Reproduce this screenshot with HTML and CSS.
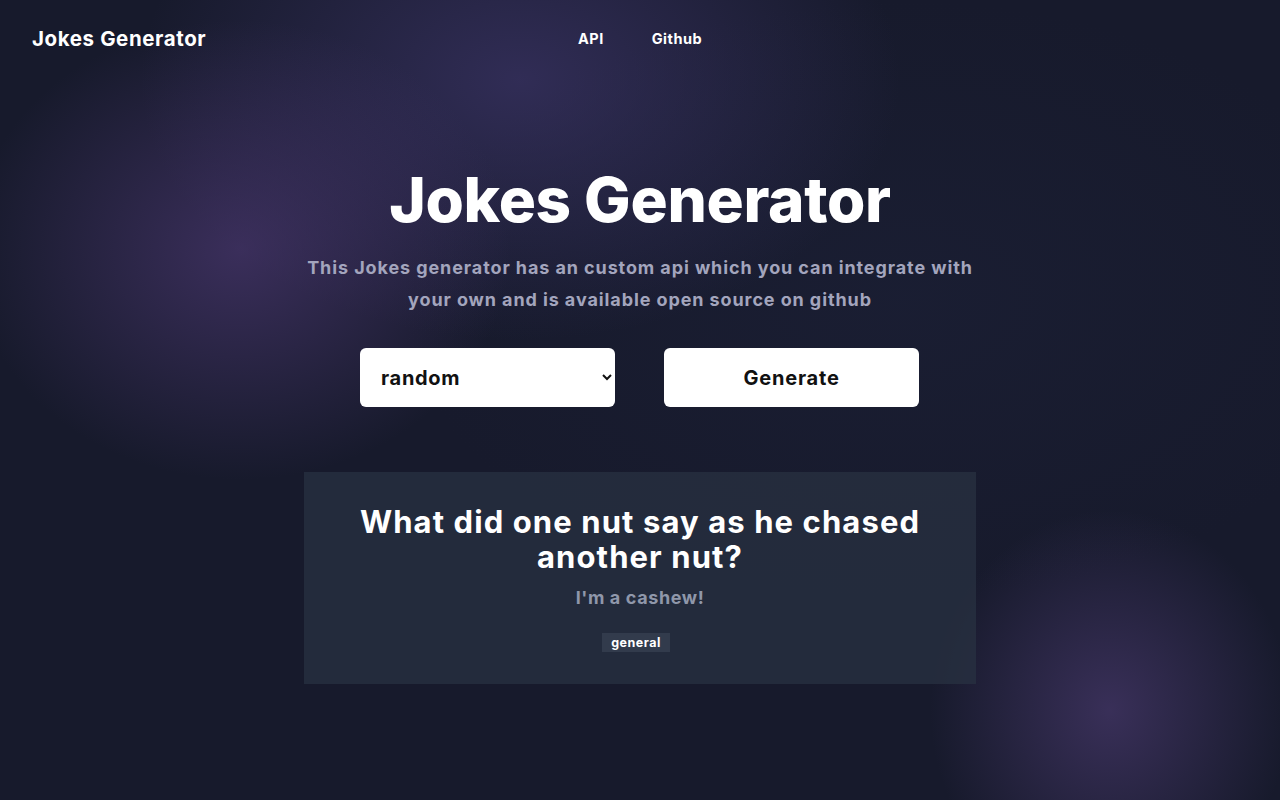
FILE: index.html
```html
<!DOCTYPE html>
<html lang="en">
<head>
<meta charset="utf-8">
<title>Jokes Generator</title>
<link rel="stylesheet" href="styles.css">
</head>
<body>
<div class="page">
  <header class="nav">
    <a class="brand" href="#">Jokes Generator</a>
    <nav class="links">
      <a href="#">API</a>
      <a href="#">Github</a>
    </nav>
    <div></div>
  </header>
  <main class="main">
    <h1 class="title">Jokes Generator</h1>
    <p class="lead">This Jokes generator has an custom api which you can integrate with your own and is available open source on github</p>
    <div class="controls">
      <div class="select-wrap">
        <select class="select">
          <option>random</option>
          <option>general</option>
          <option>programming</option>
        </select>
      </div>
      <button class="btn">Generate</button>
    </div>
    <section class="card">
      <h2 class="question">What did one nut say as he chased another nut?</h2>
      <p class="answer">I'm a cashew!</p>
      <span class="tag">general</span>
    </section>
  </main>
</div>
</body>
</html>
```

FILE: styles.css
```css
* { box-sizing: border-box; }
html, body { margin: 0; height: 100%; }
body {
  font-family: Inter, "Noto Sans", sans-serif;
  color: #fff;
  background-color: #171a2c;
  background-image:
    radial-gradient(ellipse 270px 230px at 240px 250px, rgba(82,60,122,0.6), rgba(82,60,122,0) 100%),
    radial-gradient(ellipse 380px 260px at 520px 80px, rgba(70,60,120,0.55), rgba(70,60,120,0) 100%),
    radial-gradient(ellipse 180px 200px at 1110px 710px, rgba(85,65,125,0.55), rgba(85,65,125,0) 100%),
    radial-gradient(ellipse 500px 300px at 900px 300px, rgba(30,35,60,0.4), rgba(30,35,60,0) 100%);
  overflow: hidden;
}
.page { min-height: 100vh; }
.nav {
  display: grid;
  grid-template-columns: 1fr auto 1fr;
  align-items: center;
  padding: 0 32px;
  height: 76px;
}
.nav a { color: #fff; text-decoration: none; }
.brand { font-size: 20.5px; font-weight: 700; justify-self: start; letter-spacing: 0.6px; }
.links { display: flex; gap: 48px; font-size: 14.5px; font-weight: 700; letter-spacing: 0.5px; }
.main {
  display: flex;
  flex-direction: column;
  align-items: center;
  padding-top: 86px;
}
.title {
  margin: 0;
  font-size: 62px;
  font-weight: 800;
  line-height: 76px;
  letter-spacing: -0.3px;
}
.lead {
  margin: 14px 0 0;
  width: 690px;
  text-align: center;
  font-size: 18px;
  font-weight: 700;
  line-height: 32px;
  letter-spacing: 0.9px;
  color: #a3a5bd;
}
.controls {
  display: flex;
  gap: 49px;
  margin-top: 32px;
  padding-right: 1px;
}
.select-wrap, .btn {
  width: 255px;
  height: 59px;
}
.select {
  width: 100%;
  height: 100%;
  border: 0;
  border-radius: 6px;
  background: #fff;
  color: #111;
  font: 700 20px Inter, sans-serif;
  letter-spacing: 0.7px;
  padding: 0 8px 0 17px;
}
.btn {
  border: 0;
  border-radius: 6px;
  background: #fff;
  color: #111;
  font: 700 20px Inter, sans-serif;
  letter-spacing: 0.8px;
  cursor: pointer;
}
.card {
  margin-top: 65px;
  width: 672px;
  padding: 32px 30px 32px;
  background: rgba(40,50,66,0.75);
  display: flex;
  flex-direction: column;
  align-items: center;
  text-align: center;
}
.question {
  margin: 0;
  font-size: 31px;
  font-weight: 700;
  line-height: 35px;
  letter-spacing: 1.1px;
}
.answer {
  margin: 10px 0 0;
  font-size: 18px;
  font-weight: 700;
  color: #8f97aa;
  line-height: 28px;
  letter-spacing: 0.6px;
}
.tag {
  margin: 21px 8px 0 0;
  background: #323b4c;
  font-size: 12.5px;
  font-weight: 700;
  padding: 2px 9px;
  line-height: 15px;
  letter-spacing: 0.5px;
}
```
